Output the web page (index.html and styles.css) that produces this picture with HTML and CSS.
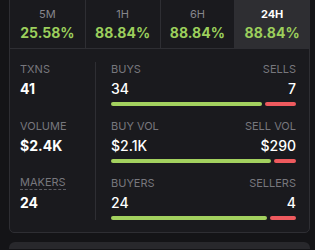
FILE: index.html
```html
<!DOCTYPE html>
<html lang="en">
<head>
    <meta charset="UTF-8">
    <meta name="viewport" content="width=device-width, initial-scale=1.0">
    <title>Pair stats</title>
    <link rel="stylesheet" href="styles.css">
</head>
<body>

    <div class="card">
        <div class="tabs">
            <div class="tab">
                <span class="tab-label">5M</span>
                <span class="tab-value">25.58%</span>
            </div>
            <div class="tab">
                <span class="tab-label">1H</span>
                <span class="tab-value">88.84%</span>
            </div>
            <div class="tab">
                <span class="tab-label">6H</span>
                <span class="tab-value">88.84%</span>
            </div>
            <div class="tab active">
                <span class="tab-label">24H</span>
                <span class="tab-value">88.84%</span>
            </div>
        </div>

        <div class="stats">
            <div class="left">
                <div class="cell">
                    <span class="label">TXNS</span>
                    <span class="big">41</span>
                </div>
                <div class="cell">
                    <span class="label">VOLUME</span>
                    <span class="big">$2.4K</span>
                </div>
                <div class="cell">
                    <span class="label dashed">MAKERS</span>
                    <span class="big">24</span>
                </div>
            </div>

            <div class="right">
                <div class="cell">
                    <div class="line"><span class="label">BUYS</span><span class="label">SELLS</span></div>
                    <div class="line"><span class="num">34</span><span class="num">7</span></div>
                    <div class="bar">
                        <span class="buy" style="flex-grow: 34"></span>
                        <span class="sell" style="flex-grow: 7"></span>
                    </div>
                </div>
                <div class="cell">
                    <div class="line"><span class="label">BUY VOL</span><span class="label">SELL VOL</span></div>
                    <div class="line"><span class="num">$2.1K</span><span class="num">$290</span></div>
                    <div class="bar">
                        <span class="buy" style="flex-grow: 2100"></span>
                        <span class="sell" style="flex-grow: 290"></span>
                    </div>
                </div>
                <div class="cell">
                    <div class="line"><span class="label">BUYERS</span><span class="label">SELLERS</span></div>
                    <div class="line"><span class="num">24</span><span class="num">4</span></div>
                    <div class="bar">
                        <span class="buy" style="flex-grow: 24"></span>
                        <span class="sell" style="flex-grow: 4"></span>
                    </div>
                </div>
            </div>
        </div>
    </div>

    <div class="next-card"></div>

</body>
</html>
```

FILE: styles.css
```css
body {
    background: #141417;
    margin: 0;
    padding: 0 0 0 9px;
    font-family: Inter, "Noto Sans", sans-serif;
    color: #ffffff;
    height: 250px;
    overflow: hidden;
}
.card {
    width: 299px;
    margin-top: -1px;
    background: #1a1a1e;
    border: 1px solid #2e2e33;
    border-radius: 0 0 5px 5px;
}
.tabs {
    display: grid;
    grid-template-columns: repeat(4, 1fr);
    border-bottom: 1px solid #2e2e33;
}
.tab {
    height: 48px;
    display: flex;
    flex-direction: column;
    align-items: center;
    justify-content: center;
    gap: 3px;
}
.tab + .tab {
    border-left: 1px solid #2e2e33;
}
.tab.active {
    background: #2e2e32;
}
.tab-label {
    font-size: 11px;
    line-height: 14px;
    color: #86868c;
}
.tab.active .tab-label {
    color: #ffffff;
    font-weight: 700;
}
.tab-value {
    font-size: 14px;
    line-height: 17px;
    font-weight: 700;
    color: #9ccf5c;
}
.stats {
    display: flex;
    padding: 13px 13px 12px 10px;
}
.left {
    width: 75px;
    border-right: 1px solid #2e2e33;
    display: flex;
    flex-direction: column;
    gap: 13px;
}
.right {
    flex: 1;
    padding-left: 15px;
    display: flex;
    flex-direction: column;
    gap: 13px;
}
.cell {
    height: 44px;
    display: flex;
    flex-direction: column;
}
.line {
    display: flex;
    justify-content: space-between;
}
.line + .line {
    margin-top: 4px;
}
.label {
    font-size: 11px;
    line-height: 14px;
    color: #77777d;
}
.label.dashed {
    align-self: flex-start;
    line-height: 13px;
    border-bottom: 1px dashed #5c5c62;
}
.big {
    margin-top: 4px;
    font-size: 14px;
    line-height: 18px;
    font-weight: 700;
}
.num {
    font-size: 14px;
    line-height: 18px;
    font-weight: 500;
}
.bar {
    display: flex;
    gap: 3px;
    height: 4px;
    margin-top: 4px;
}
.bar span {
    flex-basis: 0;
    border-radius: 2px;
}
.buy {
    background: #a3d15f;
}
.sell {
    background: #ee5a5e;
}
.next-card {
    width: 301px;
    height: 7px;
    margin-top: 9px;
    background: #28282c;
    border-radius: 6px 6px 0 0;
}
```
